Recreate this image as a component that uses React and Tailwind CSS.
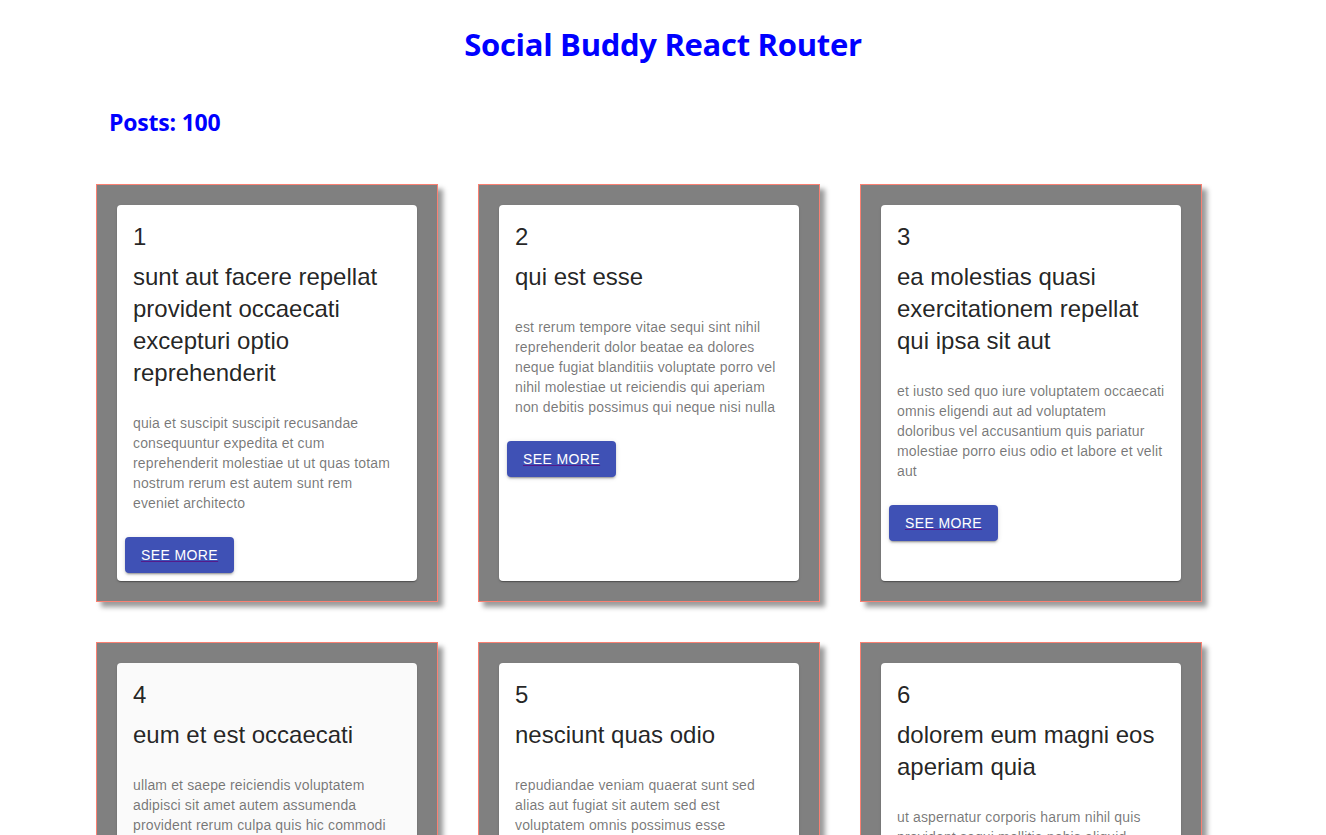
import React from "react";

const posts = [
  {
    id: 1,
    title: "sunt aut facere repellat provident occaecati excepturi optio reprehenderit",
    body: "quia et suscipit suscipit recusandae consequuntur expedita et cum reprehenderit molestiae ut ut quas totam nostrum rerum est autem sunt rem eveniet architecto",
  },
  {
    id: 2,
    title: "qui est esse",
    body: "est rerum tempore vitae sequi sint nihil reprehenderit dolor beatae ea dolores neque fugiat blanditiis voluptate porro vel nihil molestiae ut reiciendis qui aperiam non debitis possimus qui neque nisi nulla",
  },
  {
    id: 3,
    title: "ea molestias quasi exercitationem repellat qui ipsa sit aut",
    body: "et iusto sed quo iure voluptatem occaecati omnis eligendi aut ad voluptatem doloribus vel accusantium quis pariatur molestiae porro eius odio et labore et velit aut",
  },
  {
    id: 4,
    title: "eum et est occaecati",
    body: "ullam et saepe reiciendis voluptatem adipisci sit amet autem assumenda provident rerum culpa quis hic commodi nesciunt rem tenetur doloremque ipsam iure quis sunt voluptatem rerum illo velit",
  },
  {
    id: 5,
    title: "nesciunt quas odio",
    body: "repudiandae veniam quaerat sunt sed alias aut fugiat sit autem sed est voluptatem omnis possimus esse voluptatibus quis est aut tenetur dolor neque",
  },
  {
    id: 6,
    title: "dolorem eum magni eos aperiam quia",
    body: "ut aspernatur corporis harum nihil quis provident sequi mollitia nobis aliquid molestiae perspiciatis et ea nemo ab reprehenderit accusantium quas voluptate dolores velit et doloremque molestiae",
  },
];

const Post = ({ post, hovered }) => {
  return (
    <div className="flex flex-col border border-[#fa8072] bg-[#808080] p-5 shadow-[5px_5px_5px_#9a9a9a]">
      <div
        className={`flex-1 rounded-[4px] shadow-[0_2px_1px_-1px_rgba(0,0,0,0.2),0_1px_1px_0_rgba(0,0,0,0.14),0_1px_3px_0_rgba(0,0,0,0.12)] ${
          hovered ? "bg-[#fafafa]" : "bg-white"
        }`}
      >
        <div className="p-4 font-['Liberation_Sans',Arial,sans-serif]">
          <h5 className="text-[24px] leading-8 text-[rgba(0,0,0,0.87)]">{post.id}</h5>
          <h5 className="mt-2 mb-6 text-[24px] leading-8 text-[rgba(0,0,0,0.87)]">{post.title}</h5>
          <p className="text-[14px] leading-5 tracking-[0.14px] text-[rgba(0,0,0,0.54)]">{post.body}</p>
        </div>
        <div className="p-2">
          <a href="#" className="underline decoration-[#551a8b]">
            <button className="h-9 rounded-[4px] bg-[#3f51b5] px-4 font-['Liberation_Sans',Arial,sans-serif] text-[14px] font-medium uppercase tracking-[0.4px] text-white underline decoration-[#551a8b] shadow-[0_3px_1px_-2px_rgba(0,0,0,0.2),0_2px_2px_0_rgba(0,0,0,0.14),0_1px_5px_0_rgba(0,0,0,0.12)]">
              See more
            </button>
          </a>
        </div>
      </div>
    </div>
  );
};

const App = () => {
  return (
    <div className="min-h-screen bg-white pb-10">
      <h1 className="pt-[22px] text-center font-['Open_Sans','Noto_Sans',sans-serif] text-[31px] leading-[44px] font-bold tracking-[-0.3px] text-[#0000ff]">
        Social Buddy React Router
      </h1>
      <h2 className="mt-[40px] pl-[109px] font-['Open_Sans','Noto_Sans',sans-serif] text-[23px] leading-8 font-bold tracking-[-0.2px] text-[#0000ff]">
        Posts: 100
      </h2>
      <div className="mt-[46px] grid grid-cols-[repeat(3,342px)] gap-10 pl-[96px]">
        {posts.map((post) => (
          <Post key={post.id} post={post} hovered={post.id === 4} />
        ))}
      </div>
    </div>
  );
};

export default App;
